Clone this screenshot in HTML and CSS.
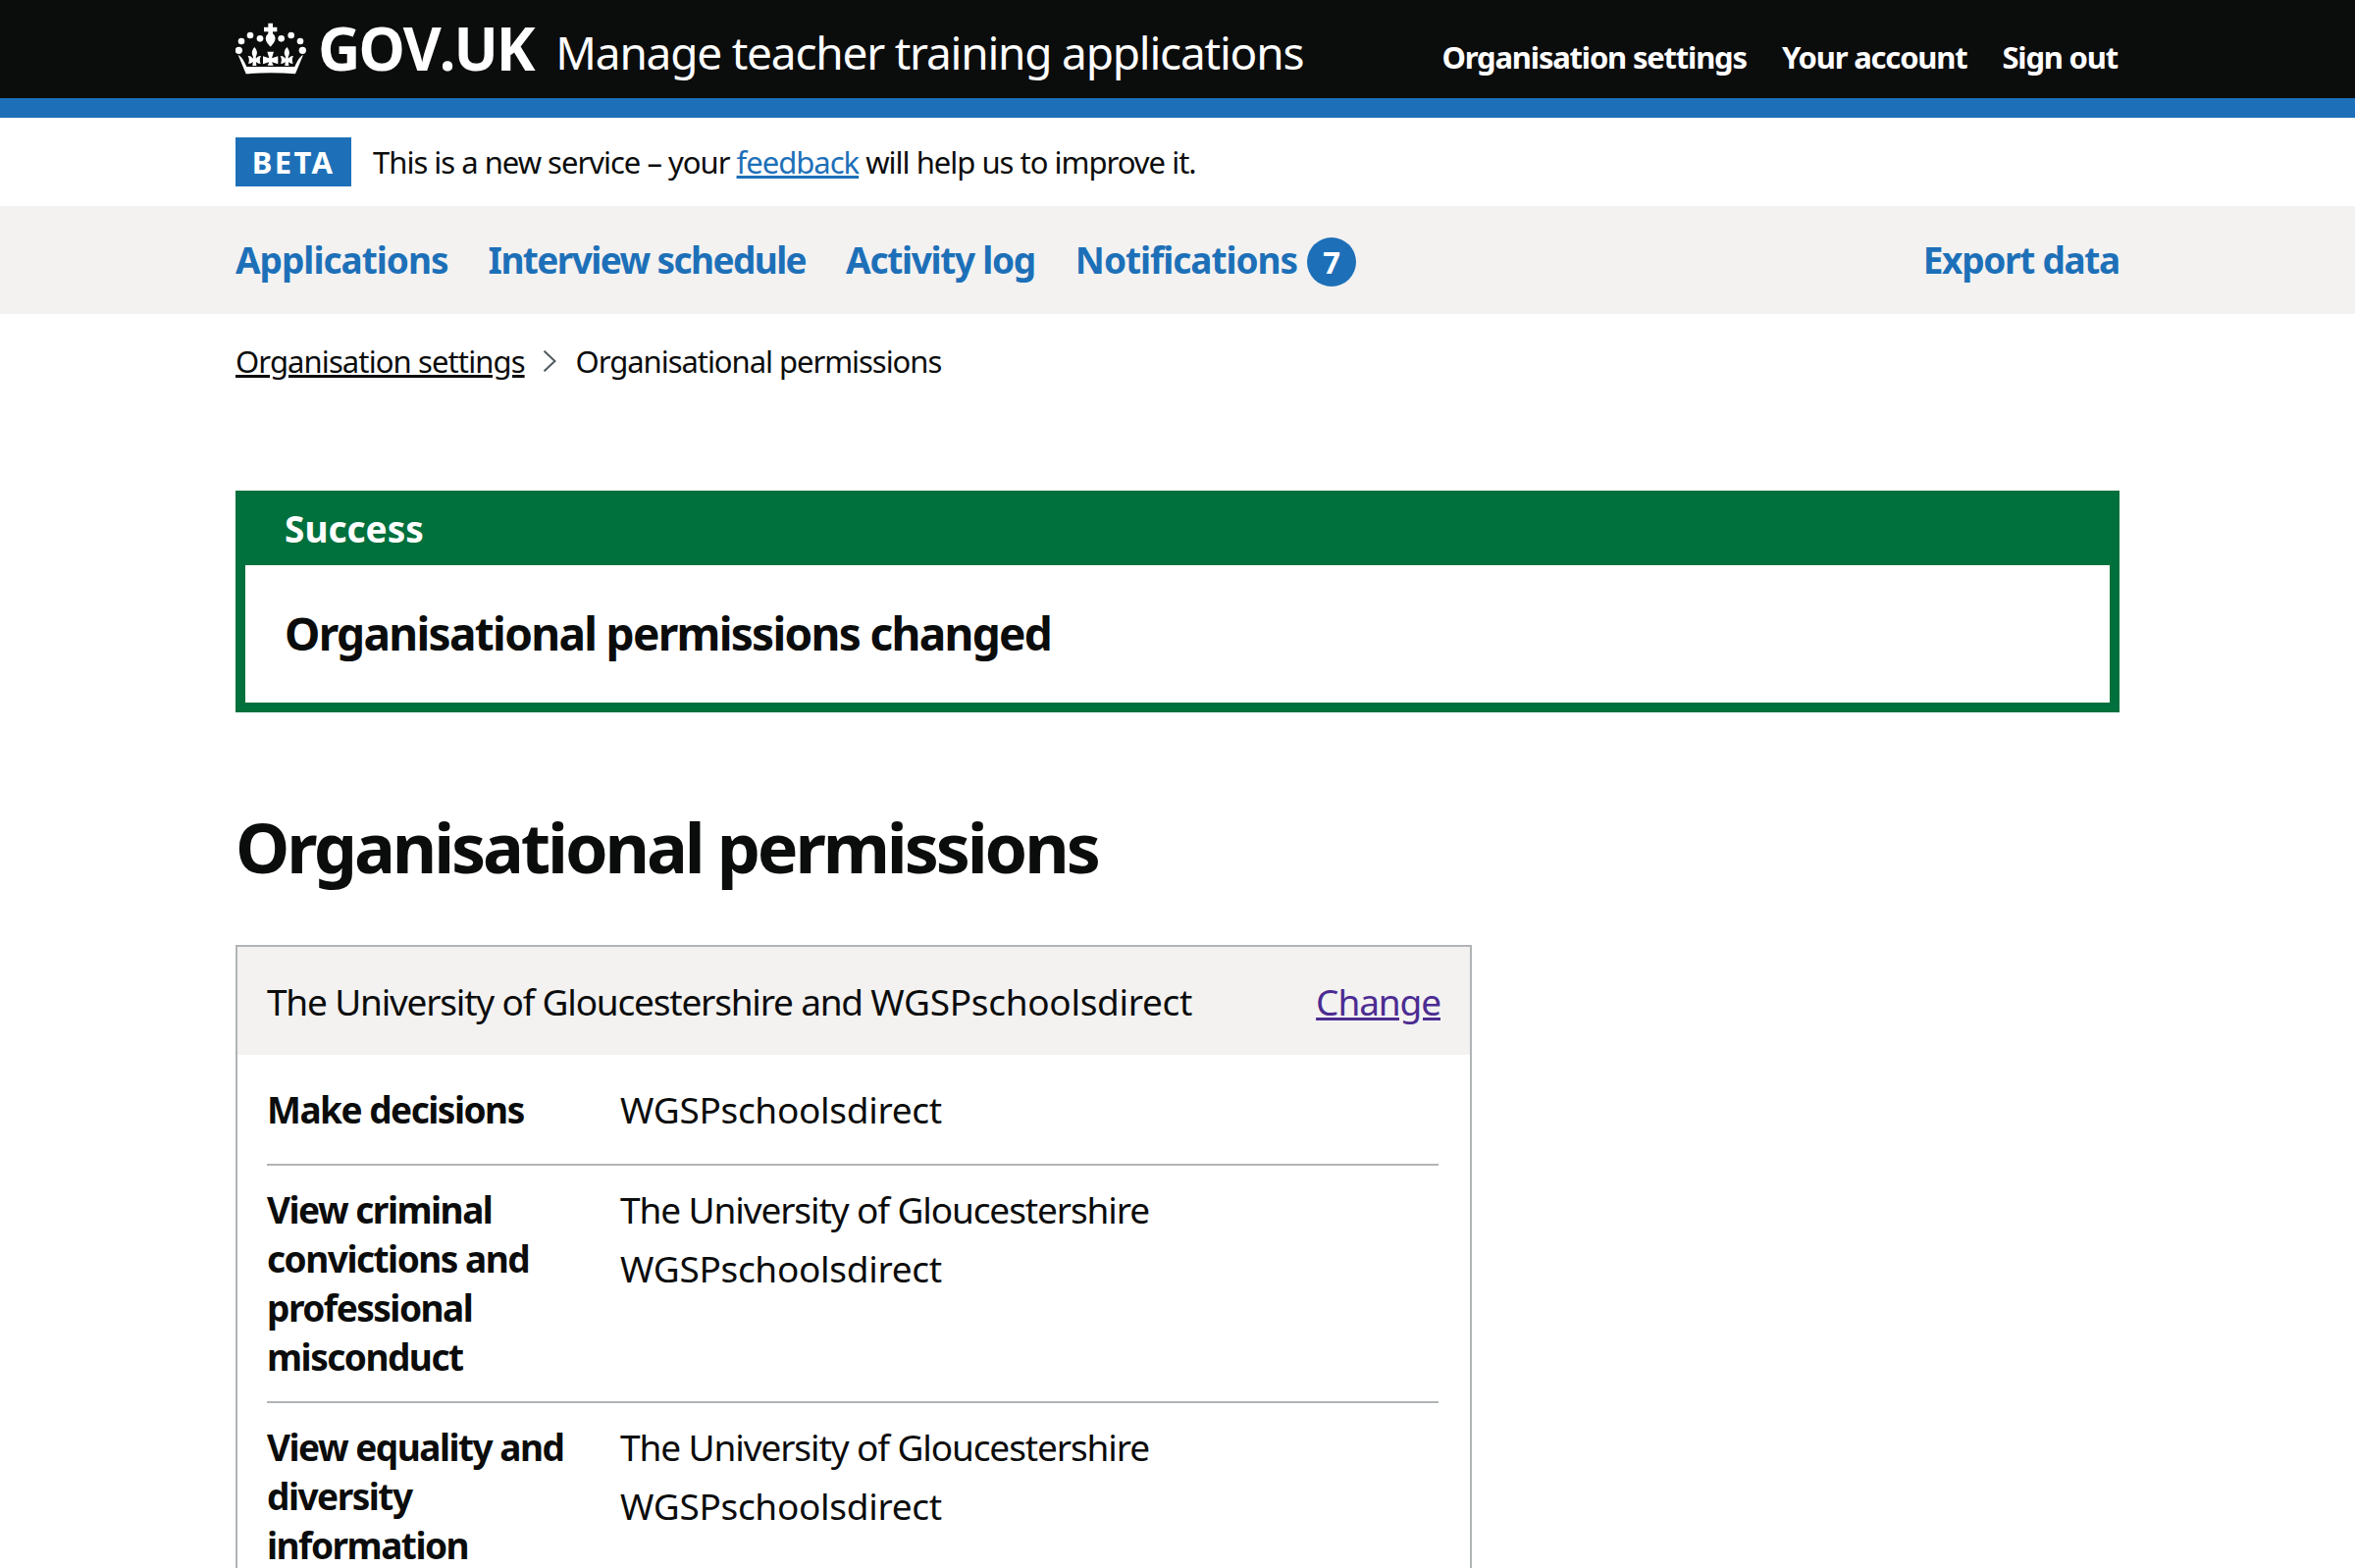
FILE: index.html
```html
<!DOCTYPE html>
<html lang="en">
<head>
  <meta charset="UTF-8" />
  <title>Organisational permissions - Manage teacher training applications</title>
  <link rel="stylesheet" href="styles.css">
</head>
<body>
  <header class="header">
    <div class="width header-row">
      <a class="logo" href="#">
        <svg class="crown" viewBox="30 33 216 159" fill="#fff" aria-hidden="true">
          <path d="M130 35h14v12h13v14h-13v6c12 10 10 24-7 40-17-16-19-30-7-40v-6h-13V47h13z"/>
          <circle cx="75" cy="72" r="10"/>
          <circle cx="200" cy="72" r="10"/>
          <circle cx="105" cy="82" r="10"/>
          <circle cx="170" cy="82" r="10"/>
          <circle cx="48" cy="90" r="10"/>
          <circle cx="228" cy="90" r="10"/>
          <circle cx="40" cy="118" r="11"/>
          <circle cx="235" cy="118" r="11"/>
          <path d="M127 122h20l-6 20 19-6v24l-19-6 5 10h-18l5-10-19 6v-24l19 6z"/>
          <path d="M88 108c9 10 10 20 4 30l1 5c4-6 9-9 15-8-4 7-5 15-1 23-6 1-10-1-14-5l1 12h-12l1-12c-4 4-8 6-14 5 4-8 3-16-1-23 6-1 11 2 15 8l1-5c-6-10-5-20 4-30z"/>
          <path d="M187 108c9 10 10 20 4 30l1 5c4-6 9-9 15-8-4 7-5 15-1 23-6 1-10-1-14-5l1 12h-12l1-12c-4 4-8 6-14 5 4-8 3-16-1-23 6-1 11 2 15 8l1-5c-6-10-5-20 4-30z"/>
          <path d="M38 132c12 6 19 20 26 36h147c7-16 14-30 26-36l-24 58c-50-4-101-4-151 0z"/>
        </svg>
        <span class="logotype">GOV.UK</span>
      </a>
      <a class="service-name" href="#">Manage teacher training applications</a>
      <nav class="header-nav">
        <a href="#">Organisation settings</a>
        <a href="#">Your account</a>
        <a href="#">Sign out</a>
      </nav>
    </div>
  </header>
  <div class="header-stripe"></div>

  <div class="width phase-banner">
    <strong class="tag">BETA</strong>
    <span>This is a new service – your <a class="link" href="#">feedback</a> will help us to improve it.</span>
  </div>

  <nav class="primary-nav">
    <div class="width primary-row">
      <a href="#" class="nav-applications">Applications</a>
      <a href="#" class="nav-interviews">Interview schedule</a>
      <a href="#">Activity log</a>
      <a href="#" class="nav-notifications">Notifications <span class="count">7</span></a>
      <a href="#" class="nav-export">Export data</a>
    </div>
  </nav>

  <main class="width">
    <div class="breadcrumbs">
      <a href="#">Organisation settings</a>
      <svg class="chevron" viewBox="0 0 14 22" aria-hidden="true"><path d="M1.500 0.700l11 10.300-11 10.300" fill="none" stroke="#505a5f" stroke-width="2"/></svg>
      <span class="crumb-current">Organisational permissions</span>
    </div>

    <div class="success">
      <h2 class="success-title">Success</h2>
      <div class="success-body">Organisational permissions changed</div>
    </div>

    <h1 class="page-title">Organisational permissions</h1>

    <section class="card">
      <div class="card-head">
        <span class="card-title">The University of Gloucestershire and <span class="org-short">WGSPschoolsdirect</span></span>
        <a class="card-change" href="#">Change</a>
      </div>
      <dl class="summary">
        <div class="summary-row">
          <dt>Make decisions</dt>
          <dd><p class="org-short">WGSPschoolsdirect</p></dd>
        </div>
        <div class="summary-row">
          <dt>View criminal convictions and professional misconduct</dt>
          <dd><p>The University of Gloucestershire</p><p class="org-short">WGSPschoolsdirect</p></dd>
        </div>
        <div class="summary-row">
          <dt>View equality and diversity information</dt>
          <dd><p>The University of Gloucestershire</p><p class="org-short">WGSPschoolsdirect</p></dd>
        </div>
      </dl>
    </section>
  </main>
</body>
</html>
```

FILE: styles.css
```css
:root {
  --black: #0b0c0c;
  --blue: #1d70b8;
  --grey: #f3f2f1;
  --border: #b1b4b6;
  --green: #00703c;
  --visited: #4c2c92;
}

* {
  box-sizing: border-box;
}

html,
body {
  height: 1598px;
  overflow: hidden;
}

body {
  margin: 0;
  background: #fff;
  color: var(--black);
  font-family: "Noto Sans", sans-serif;
}

a {
  text-decoration: none;
}

.width {
  width: 1920px;
  margin: 0 auto;
}

/* header */
.header {
  height: 100px;
  background: var(--black);
}

.header-row {
  display: flex;
  align-items: center;
  height: 100px;
}

.logo {
  display: flex;
  align-items: center;
  color: #fff;
  margin-top: -2px;
}

.crown {
  width: 72px;
  height: 53px;
  margin-right: 12px;
}

.logotype {
  font-family: "Open Sans", sans-serif;
  font-size: 60px;
  font-weight: 700;
  letter-spacing: -2.2px;
}

.service-name {
  margin-left: 23px;
  padding-top: 6px;
  color: #fff;
  font-size: 46px;
  letter-spacing: -1.22px;
}

.header-nav {
  display: flex;
  gap: 36px;
  margin-left: auto;
  padding: 16px 2px 0 0;
}

.header-nav a {
  color: #fff;
  font-size: 31px;
  font-weight: 700;
  letter-spacing: -1.2px;
}

.header-stripe {
  height: 20px;
  background: var(--blue);
}

/* beta */
.phase-banner {
  display: flex;
  align-items: center;
  gap: 22px;
  height: 90px;
  font-size: 31px;
  letter-spacing: -1px;
}

.tag {
  display: block;
  width: 118px;
  height: 50px;
  background: var(--blue);
  color: #fff;
  font-size: 31px;
  line-height: 50px;
  text-align: center;
  letter-spacing: 2.4px;
}

.link {
  color: var(--blue);
  text-decoration: underline;
}

/* primary nav */
.primary-nav {
  height: 110px;
  background: var(--grey);
}

.primary-row {
  display: flex;
  align-items: center;
  gap: 41px;
  height: 110px;
  padding-bottom: 2px;
}

.primary-row a {
  color: var(--blue);
  font-size: 37px;
  font-weight: 700;
  letter-spacing: -1.3px;
  white-space: nowrap;
}

.primary-row .nav-applications {
  letter-spacing: -1px;
}

.primary-row .nav-interviews {
  letter-spacing: -1.6px;
}

.primary-row .nav-notifications {
  display: flex;
  align-items: center;
  gap: 10px;
  letter-spacing: -1.05px;
}

.primary-row .nav-export {
  margin-left: auto;
}

.count {
  width: 50px;
  height: 50px;
  margin-top: 6px;
  border-radius: 50%;
  background: var(--blue);
  color: #fff;
  font-size: 31px;
  line-height: 50px;
  letter-spacing: 0;
  text-align: center;
}

/* breadcrumbs */
.breadcrumbs {
  display: flex;
  align-items: center;
  height: 70px;
  margin-top: 13px;
  font-size: 31px;
  letter-spacing: -0.9px;
}

.breadcrumbs a {
  color: var(--black);
  text-decoration: underline;
}

.crumb-current {
  letter-spacing: -1.05px;
}

.chevron {
  width: 14px;
  height: 22px;
  margin: 0 20px 0 18px;
}

/* success */
.success {
  margin-top: 97px;
  border: 10px solid var(--green);
  background: #fff;
}

.success-title {
  margin: 0;
  height: 66px;
  padding-left: 40px;
  background: var(--green);
  color: #fff;
  font-size: 37px;
  line-height: 57px;
}

.success-body {
  height: 140px;
  padding: 29px 40px;
  font-size: 46px;
  font-weight: 700;
  letter-spacing: -1.7px;
  line-height: 80px;
}

.page-title {
  margin: 97px 0 0;
  font-size: 70px;
  font-weight: 700;
  letter-spacing: -3.1px;
  line-height: 80px;
}

/* summary card */
.card {
  width: 1260px;
  margin-top: 60px;
  border: 2px solid var(--border);
  font-size: 37px;
  letter-spacing: -0.9px;
}

.card-head {
  display: flex;
  align-items: center;
  justify-content: space-between;
  height: 110px;
  padding: 0 30px;
  background: var(--grey);
}

.card-title {
  letter-spacing: -1.2px;
}

.card-change {
  color: var(--visited);
  letter-spacing: -1.1px;
  text-decoration: underline;
}

.summary {
  margin: 0;
  padding: 11px 32px 0 30px;
}

.summary-row {
  display: flex;
  padding: 20px 0;
  border-bottom: 2px solid var(--border);
  line-height: 50px;
}

.summary-row dt {
  width: 360px;
  padding-right: 30px;
  font-weight: 700;
  letter-spacing: -1.5px;
}

.summary-row dd {
  margin: 0;
}

.summary-row p {
  margin: 0 0 10px;
  letter-spacing: -1.1px;
}

.card .org-short {
  letter-spacing: -0.3px;
}
```
